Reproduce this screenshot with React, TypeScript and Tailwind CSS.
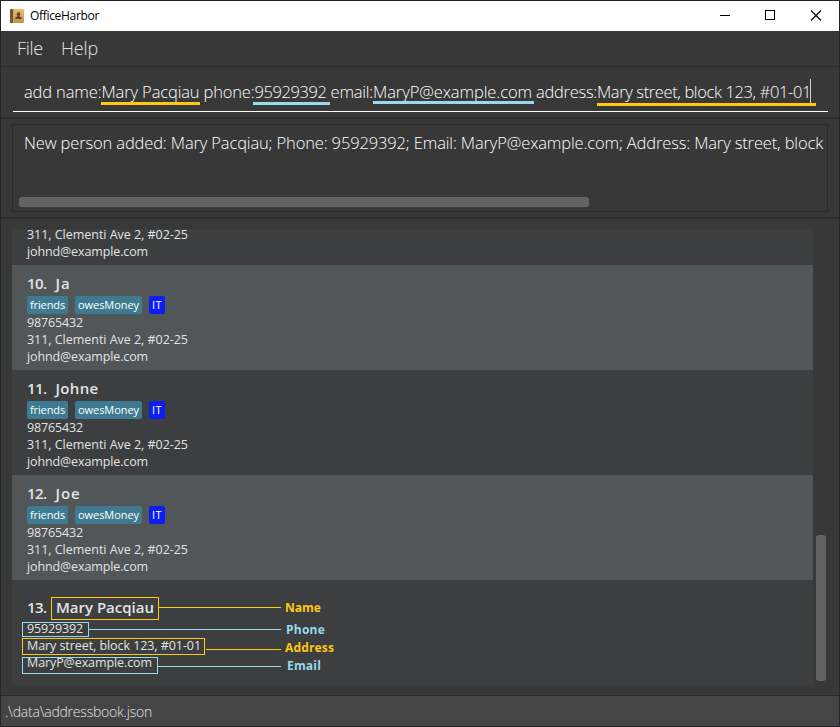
import { useLayoutEffect, useRef, useState } from "react";
import clsx from "clsx";

type FitProps = { text: string; width: number; className?: string };

// A single line of text whose letter spacing is adjusted to span a given width.
function Fit({ text, width, className }: FitProps) {
  const ref = useRef<HTMLSpanElement>(null);
  const [spacing, setSpacing] = useState(0);
  useLayoutEffect(() => {
    const el = ref.current;
    if (!el) return;
    el.style.letterSpacing = "0px";
    const natural = el.getBoundingClientRect().width;
    const next = (width - natural) / text.length;
    el.style.letterSpacing = `${next}px`;
    setSpacing(next);
  }, [text, width]);
  return (
    <span ref={ref} style={{ letterSpacing: spacing }} className={clsx("inline-block whitespace-pre", className)}>
      {text}
    </span>
  );
}

const tags = [
  { label: "friends", width: 35, color: "bg-[#3e7b91]" },
  { label: "owesMoney", width: 61, color: "bg-[#3e7b91]" },
  { label: "IT", width: 10, color: "bg-[#0b1ff5]" },
];

const people = [
  { id: "10.", name: "Ja", width: 15, alt: true },
  { id: "11.", name: "Johne", width: 43, alt: false },
  { id: "12.", name: "Joe", width: 25, alt: true },
];

function PersonRow({ id, name, width, alt }: (typeof people)[number]) {
  return (
    <div className={clsx("h-[105px] shrink-0 pl-[15px] pt-2", alt ? "bg-[#515658]" : "bg-[#3c3e3f]")}>
      <div className="flex h-[23px] items-start text-[15px] font-semibold leading-[21px]">
        <Fit text={id} width={19.5} />
        <Fit text={name} width={width} className="ml-[9px]" />
      </div>
      <div className="flex h-[18px] gap-[7px] text-[11px] leading-[18px]">
        {tags.map((t) => (
          <div key={t.label} className={clsx("rounded-[2px] px-[3px] text-white", t.color)}>
            <Fit text={t.label} width={t.width} />
          </div>
        ))}
      </div>
      <div className="flex flex-col items-start text-[12.5px] leading-[17px]">
        <Fit text="98765432" width={56} />
        <Fit text="311, Clementi Ave 2, #02-25" width={161} />
        <Fit text="johnd@example.com" width={121} />
      </div>
    </div>
  );
}

function Callouts() {
  return (
    <div className="absolute inset-0 text-[12px] font-bold leading-4">
      <div className="absolute left-[39px] top-[17px] h-[23px] w-[108px] border border-[#ffc90e]" />
      <div className="absolute left-[147px] top-[27px] h-px w-[122px] bg-[#ffc90e]" />
      <div className="absolute left-[273px] top-[20px] flex text-[#ffc90e]"><Fit text="Name" width={36} /></div>
      <div className="absolute left-[10px] top-[42px] h-[15px] w-[67px] border border-[#99d9ea]" />
      <div className="absolute left-[77px] top-[49px] h-px w-[192px] bg-[#99d9ea]" />
      <div className="absolute left-[274px] top-[42px] flex text-[#99d9ea]"><Fit text="Phone" width={39} /></div>
      <div className="absolute left-[10px] top-[58px] h-[17px] w-[183px] border border-[#ffc90e]" />
      <div className="absolute left-[194px] top-[69px] h-px w-[75px] bg-[#ffc90e]" />
      <div className="absolute left-[273px] top-[60px] flex text-[#ffc90e]"><Fit text="Address" width={49} /></div>
      <div className="absolute left-[10px] top-[77px] h-[17px] w-[136px] border border-[#99d9ea]" />
      <div className="absolute left-[146px] top-[86px] h-px w-[123px] bg-[#99d9ea]" />
      <div className="absolute left-[275px] top-[78px] flex text-[#99d9ea]"><Fit text="Email" width={34} /></div>
    </div>
  );
}

const command = [
  { text: "add name:", width: 77.5, line: "" },
  { text: "Mary Pacqiau", width: 98, line: "left-[-0.5px] top-[22px] w-[99px] bg-[#ffc90e]" },
  { text: " phone:", width: 55, line: "" },
  { text: "95929392", width: 72, line: "left-[-1.5px] top-[22px] w-[77px] bg-[#99d9ea]" },
  { text: " email:", width: 46.5, line: "" },
  { text: "MaryP@example.com", width: 159, line: "left-0 top-[21px] w-[161px] bg-[#99d9ea]" },
  { text: " address:", width: 65, line: "" },
  { text: "Mary street, block 123, #01-01", width: 214, line: "left-0 top-[23px] w-[219px] bg-[#ffc90e]" },
];

export default function App() {
  return (
    <div className="flex h-[727px] w-[840px] flex-col overflow-hidden border border-[#242527] bg-[#383838] font-['Open_Sans','Noto_Sans',sans-serif] text-[#e2e3e3]">
      <header className="flex h-[30px] shrink-0 items-center bg-white pl-[9px] text-black">
        <svg width="14" height="14" viewBox="0 0 14 14" className="mr-[6px]">
          <defs>
            <linearGradient id="cover" x1="0" y1="0" x2="0" y2="1">
              <stop offset="0" stopColor="#ebbe6b" />
              <stop offset="1" stopColor="#c39045" />
            </linearGradient>
          </defs>
          <rect width="14" height="14" rx="1" fill="url(#cover)" />
          <rect width="3" height="14" rx="1" fill="#6b5543" />
          <rect x="3" width="1" height="14" fill="#d6a456" />
          <path d="M8.5 3.2a1.8 1.8 0 0 1 1 3.3v1l2.1.9V10H5.3V8.4l2.1-.9v-1a1.8 1.8 0 0 1 1.1-3.3Z" fill="#554333" />
        </svg>
        <Fit text="OfficeHarbor" width={69} className="text-[12px] leading-[18px]" />
        <div className="ml-auto flex h-full items-center">
          <svg width="120" height="30" viewBox="0 0 120 30" fill="none" stroke="#000" shapeRendering="crispEdges">
            <path d="M1 14.5H11" />
            <rect x="46.5" y="9.5" width="9" height="9" />
            <path d="M92 9.5 102 19.5M102 9.5 92 19.5" shapeRendering="auto" strokeWidth="1.1" />
          </svg>
        </div>
      </header>

      <nav className="flex h-[36px] shrink-0 items-center gap-[18px] border-b border-[#2b2b2b] pl-4 text-[18px] font-light">
        <Fit text="File" width={26} />
        <Fit text="Help" width={37} />
      </nav>

      <section className="h-[52px] shrink-0 border-b-2 border-[#2b2b2b] px-3 pt-[13px]">
        <div className="flex h-[32px] w-[815px] border-b border-white pl-[11px] text-[16.5px] font-light leading-[24px] text-white">
          {command.map((part) => (
            <div key={part.text} className="relative flex">
              <Fit text={part.text} width={part.width} />
              {part.line && <div className={clsx("absolute h-[3px]", part.line)} />}
            </div>
          ))}
          <div className="-ml-px -mt-px h-[26px] w-px bg-[#cfcfcf]" />
        </div>
      </section>

      <section className="h-[100px] shrink-0 border-b-2 border-[#2b2b2b] px-[11px] pt-[5px]">
        <div className="flex h-[88px] w-[816px] flex-col border border-[#2b2b2b] pl-[6px] pt-[6px]">
          <Fit
            text="New person added: Mary Pacqiau; Phone: 95929392; Email: MaryP@example.com; Address: Mary street, block"
            width={799}
            className="ml-[5px] self-start text-[16.5px] font-light leading-[24px] text-white"
          />
          <div className="mb-[4px] mt-auto h-[10px] w-[570px] rounded-[3px] bg-[#626262]" />
        </div>
      </section>

      <section className="flex h-[476px] shrink-0 pl-[11px] pt-[10px]">
        <div className="flex h-[456px] w-[801px] flex-col">
          <div className="flex h-[36px] shrink-0 flex-col items-start justify-end bg-[#3c3e3f] pb-[5px] pl-[15px] text-[12.5px] leading-[17px]">
            <Fit text="311, Clementi Ave 2, #02-25" width={161} className="mt-[-3px]" />
            <Fit text="johnd@example.com" width={121} />
          </div>
          {people.map((p) => (
            <PersonRow key={p.id} {...p} />
          ))}
          <div className="relative h-[105px] shrink-0 bg-[#3c3e3f] pl-[15px] pt-[17px]">
            <div className="flex h-[23px] items-start text-[15px] font-semibold leading-[21px]">
              <Fit text="13." width={19.5} />
              <Fit text="Mary Pacqiau" width={98} className="ml-[9.5px]" />
            </div>
            <div className="flex flex-col items-start text-[12.5px] leading-[17px]">
              <Fit text="95929392" width={56} />
              <Fit text="Mary street, block 123, #01-01" width={174} />
              <Fit text="MaryP@example.com" width={125} />
            </div>
            <Callouts />
          </div>
        </div>
        <div className="ml-[3px] mt-[306px] h-[146px] w-[10px] rounded-[3px] bg-[#626262]" />
      </section>

      <footer className="flex h-[31px] shrink-0 items-center border-t border-[#2b2b2b] bg-[#454545] pl-1 text-[14px] font-light">
        <Fit text=".\data\addressbook.json" width={147} />
      </footer>
    </div>
  );
}
